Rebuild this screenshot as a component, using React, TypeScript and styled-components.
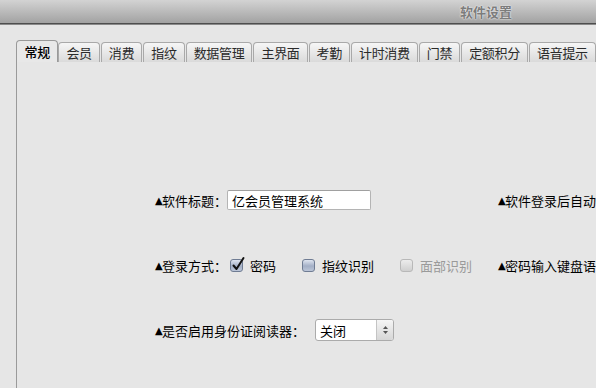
import styled, { createGlobalStyle } from 'styled-components';

const GlobalStyle = createGlobalStyle`
  html, body {
    margin: 0;
    padding: 0;
    background: #e6e6e6;
    overflow: hidden;
  }
  body {
    font-family: "Noto Sans CJK SC", "Liberation Sans", sans-serif;
    font-size: 13px;
    color: #000;
  }
`;

const Window = styled.div`
  width: 596px;
  height: 388px;
  display: flex;
  flex-direction: column;
  overflow: hidden;
`;

const TitleBar = styled.div`
  height: 23px;
  flex-shrink: 0;
  display: flex;
  align-items: center;
  padding-left: 460px;
  background: linear-gradient(#d3d3d3, #a2a2a2);
  border-bottom: 1px solid #4e4e4e;
  box-shadow: 0 1px 0 #8a8a8a;
`;

const TitleText = styled.span`
  font-size: 13px;
  font-weight: bold;
  color: #7c7c7c;
  text-shadow: 0 0 2px #ececec, 0 0 1px #ffffff;
`;

const Body = styled.div`
  flex: 1;
  display: flex;
  flex-direction: column;
  padding: 16px 0 0 16px;
`;

const TabStrip = styled.div`
  display: flex;
  align-items: flex-end;
  height: 22px;
  white-space: nowrap;
`;

const Tab = styled.div<{ $active?: boolean }>`
  flex-shrink: 0;
  display: flex;
  align-items: center;
  height: ${p => (p.$active ? 21 : 19)}px;
  padding: 0 ${p => (p.$active ? 7.5 : 7)}px;
  margin-right: ${p => (p.$active ? 0 : 1)}px;
  border: 1px solid ${p => (p.$active ? '#999' : '#a9a9a9')};
  border-bottom: none;
  border-radius: 4px 4px 0 0;
  background: ${p =>
    p.$active ? '#e8e8e8' : 'linear-gradient(#f6f6f6, #dadada)'};
  color: ${p => (p.$active ? '#000' : '#2a2a2a')};
  font-size: 13px;
  font-weight: ${p => (p.$active ? 500 : 400)};
  letter-spacing: -0.3px;
  line-height: 1;
`;

const Panel = styled.div`
  flex: 1;
  border-left: 1px solid #9a9a9a;
  padding: 127px 0 0 138px;
`;

const Form = styled.div`
  display: grid;
  grid-template-columns: 343px 400px;
  grid-auto-rows: 22px;
  row-gap: 43px;
  align-items: center;
`;

const Field = styled.div`
  display: flex;
  align-items: center;
  white-space: nowrap;
`;

const Label = styled.span`
  display: inline-flex;
  align-items: center;
  color: #000;
`;

const Marker = styled.span`
  font-family: "DejaVu Sans", sans-serif;
  font-size: 10px;
  width: 7px;
  margin-top: 1px;
  color: #000;
`;

const TextInput = styled.div`
  box-sizing: border-box;
  width: 144px;
  height: 20px;
  display: flex;
  align-items: center;
  padding-left: 4px;
  background: #fff;
  border: 1px solid #b4b4b4;
  border-top-color: #a0a0a0;
  border-radius: 2px;
`;

const Options = styled.div`
  display: flex;
  align-items: center;
  gap: 26px;
  margin-left: 3px;
`;

const Option = styled.label<{ $disabled?: boolean }>`
  display: flex;
  align-items: center;
  gap: 7px;
  color: ${p => (p.$disabled ? '#9a9a9a' : '#000')};
`;

const Box = styled.span<{ $disabled?: boolean }>`
  position: relative;
  box-sizing: border-box;
  width: 13px;
  height: 13px;
  border-radius: 3px;
  border: 1px solid ${p => (p.$disabled ? '#b8b8b8' : '#6f7c93')};
  background: ${p =>
    p.$disabled
      ? 'linear-gradient(#ececec, #cfcfcf)'
      : 'linear-gradient(#dfe5f0, #a3afc6 55%, #bcc6d8)'};
`;

const Check = styled.svg`
  position: absolute;
  left: 0;
  top: -4px;
`;

const Select = styled.div`
  box-sizing: border-box;
  width: 79px;
  height: 22px;
  display: flex;
  margin-left: 10px;
  border: 1px solid #ababab;
  border-radius: 3px;
  background: #fff;
  overflow: hidden;
`;

const SelectValue = styled.span`
  flex: 1;
  display: flex;
  align-items: center;
  padding-left: 4px;
`;

const SelectArrows = styled.span`
  width: 16px;
  display: flex;
  align-items: center;
  justify-content: center;
  border-left: 1px solid #c4c4c4;
  background: linear-gradient(#f5f5f5, #d6d6d6);
`;

const tabs = [
  '常规',
  '会员',
  '消费',
  '指纹',
  '数据管理',
  '主界面',
  '考勤',
  '计时消费',
  '门禁',
  '定额积分',
  '语音提示',
];

function CheckBox({ checked, disabled }: { checked?: boolean; disabled?: boolean }) {
  return (
    <Box $disabled={disabled}>
      {checked && (
        <Check width="14" height="16" viewBox="0 0 14 16">
          <path
            d="M2.5 9.5 L5.5 13 L12.5 2"
            fill="none"
            stroke="#111"
            strokeWidth="2"
            strokeLinecap="round"
            strokeLinejoin="round"
          />
        </Check>
      )}
    </Box>
  );
}

export default function App() {
  return (
    <>
      <GlobalStyle />
      <Window>
        <TitleBar>
          <TitleText>软件设置</TitleText>
        </TitleBar>
        <Body>
          <TabStrip>
            {tabs.map((t, i) => (
              <Tab key={t} $active={i === 0}>
                {t}
              </Tab>
            ))}
          </TabStrip>
          <Panel>
            <Form>
              <Field>
                <Label>
                  <Marker>▲</Marker>软件标题：
                </Label>
                <TextInput>亿会员管理系统</TextInput>
              </Field>
              <Field>
                <Label>
                  <Marker>▲</Marker>软件登录后自动打开：
                </Label>
              </Field>

              <Field>
                <Label>
                  <Marker>▲</Marker>登录方式：
                </Label>
                <Options>
                  <Option>
                    <CheckBox checked />
                    密码
                  </Option>
                  <Option>
                    <CheckBox />
                    指纹识别
                  </Option>
                  <Option $disabled>
                    <CheckBox disabled />
                    面部识别
                  </Option>
                </Options>
              </Field>
              <Field>
                <Label>
                  <Marker>▲</Marker>密码输入键盘语音提示：
                </Label>
              </Field>

              <Field>
                <Label>
                  <Marker>▲</Marker>是否启用身份证阅读器：
                </Label>
                <Select>
                  <SelectValue>关闭</SelectValue>
                  <SelectArrows>
                    <svg width="7" height="10" viewBox="0 0 7 10">
                      <path d="M3.5 1 L6 4 L1 4 Z" fill="#555" />
                      <path d="M3.5 9 L6 6 L1 6 Z" fill="#555" />
                    </svg>
                  </SelectArrows>
                </Select>
              </Field>
            </Form>
          </Panel>
        </Body>
      </Window>
    </>
  );
}
